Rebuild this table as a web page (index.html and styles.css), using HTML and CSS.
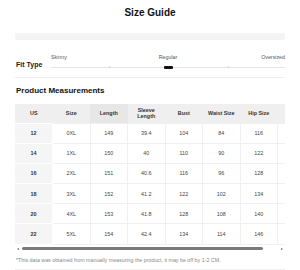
FILE: index.html
```html
<!DOCTYPE html>
<html>
<head>
<meta charset="utf-8">
<link rel="stylesheet" href="styles.css">
</head>
<body>
<div class="page">
  <h1 class="title">Size Guide</h1>
  <div class="band"></div>
  <div class="fit">
    <div class="fit-label">Fit Type</div>
    <div class="slider">
      <div class="slider-labels">
        <span>Skinny</span><span class="reg">Regular</span><span class="over">Oversized</span>
      </div>
      <div class="track">
        <div class="line"></div>
        <span class="tick t1"></span>
        <span class="tick t2"></span>
        <span class="marker"></span>
      </div>
    </div>
  </div>
  <div class="divider"></div>
  <h2 class="section">Product Measurements</h2>
  <div class="table-wrap">
    <table class="sizes">
      <thead>
        <tr>
          <th>US</th><th>Size</th><th class="hl">Length</th><th>Sleeve<br>Length</th><th>Bust</th><th>Waist Size</th><th>Hip Size</th><th></th>
        </tr>
      </thead>
      <tbody>
        <tr><td class="us">12</td><td>0XL</td><td>149</td><td>39.4</td><td>104</td><td>84</td><td>116</td><td></td></tr>
        <tr><td class="us">14</td><td>1XL</td><td>150</td><td>40</td><td>110</td><td>90</td><td>122</td><td></td></tr>
        <tr><td class="us">16</td><td>2XL</td><td>151</td><td>40.6</td><td>116</td><td>96</td><td>128</td><td></td></tr>
        <tr><td class="us">18</td><td>3XL</td><td>152</td><td>41.2</td><td>122</td><td>102</td><td>134</td><td></td></tr>
        <tr><td class="us">20</td><td>4XL</td><td>153</td><td>41.8</td><td>128</td><td>108</td><td>140</td><td></td></tr>
        <tr><td class="us">22</td><td>5XL</td><td>154</td><td>42.4</td><td>134</td><td>114</td><td>146</td><td></td></tr>
      </tbody>
    </table>
  </div>
  <div class="scrollbar">
    <span class="arrow left"></span>
    <div class="sb-track"><div class="thumb"></div></div>
    <span class="arrow right"></span>
  </div>
  <p class="note">*This data was obtained from manually measuring the product, it may be off by 1-2 CM.</p>
  <div class="divider bottom"></div>
</div>
</body>
</html>
```
FILE: styles.css
```css
* { box-sizing: border-box; }
html, body { margin: 0; padding: 0; background: #fff; }
body { font-family: "Liberation Sans", Arial, sans-serif; color: #222; width: 300px; height: 270px; overflow: hidden; }
.page { padding: 7px 15px 0 15px; }
.title { margin: 0; font-size: 10px; line-height: 12px; font-weight: 700; text-align: center; color: #111; }
.band { margin-top: 14px; height: 7px; background: #f4f4f4; border-radius: 1px; }
.fit { display: flex; align-items: flex-end; margin-top: 13px; }
.fit-label { width: 36px; padding-left: 1px; font-size: 7px; line-height: 9px; font-weight: 700; color: #222; }
.slider { flex: 1; }
.slider-labels { display: grid; grid-template-columns: 1fr auto 1fr; font-size: 5.3px; line-height: 8px; color: #555; }
.slider-labels .over { justify-self: end; }
.track { position: relative; height: 8px; }
.line { position: absolute; left: 0; right: 0; top: 6px; height: 1px; background: #e4e4e4; }
.tick { position: absolute; top: 5px; width: 1px; height: 2px; background: #d8d8d8; }
.t1 { left: 58px; }
.t2 { left: 177px; }
.marker { position: absolute; left: 113px; top: 5px; width: 9px; height: 3px; border-radius: 1px; background: #111; }
.divider { margin-top: 8px; height: 1px; background: #eeeeee; }
.section { margin: 8px 0 0 1px; font-size: 8px; line-height: 10px; font-weight: 700; color: #111; }
.table-wrap { margin-top: 8px; width: 270px; overflow: hidden; }
.sizes { border-collapse: collapse; table-layout: fixed; width: 300px; font-size: 5.4px; }
.sizes th, .sizes td { width: 37.5px; text-align: center; padding: 0; }
.sizes th { height: 19px; background: #efefef; font-weight: 700; color: #333; line-height: 6px; }
.sizes th.hl { background: #e7e7e7; }
.sizes td { height: 20.2px; color: #444; border: 1px solid #f0f0f0; }
.sizes tr td:first-child { border-left: none; }
.sizes td.us { background: #f5f5f5; font-weight: 700; color: #333; border-color: #fff; }
.scrollbar { display: flex; align-items: center; height: 8px; padding: 0 2px 0 2px; }
.arrow { width: 0; height: 0; border-top: 1.5px solid transparent; border-bottom: 1.5px solid transparent; }
.arrow.left { border-right: 2px solid #666; }
.arrow.right { border-left: 2px solid #666; }
.sb-track { flex: 1; margin: 0 3px 0 3px; height: 3px; }
.thumb { width: 94%; height: 3px; border-radius: 2px; background: #7a7a7a; }
.note { margin: 3px 0 0 1px; font-size: 5.3px; line-height: 8px; color: #888; }
.divider.bottom { margin-top: 5px; }
```
